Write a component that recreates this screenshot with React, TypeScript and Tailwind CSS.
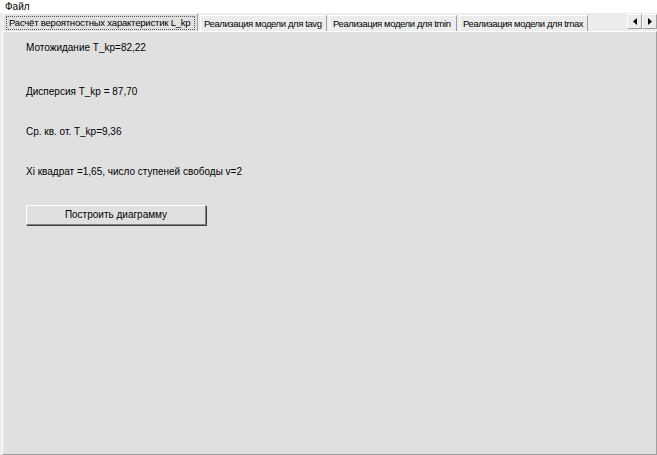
const tabs = [
  { label: "Реализация модели для tavg", w: "w-[127px]" },
  { label: "Реализация модели для tmin", w: "w-[128px]" },
  { label: "Реализация модели для tmax", w: "w-[129px]" },
];

const lines = [
  { text: "Мотожидание T_kp=82,22", mt: "mt-0" },
  { text: "Дисперсия T_kp = 87,70", mt: "mt-[32px]" },
  { text: "Ср. кв. от. T_kp=9,36", mt: "mt-[28px]" },
  { text: "Xi квадрат =1,65, число ступеней свободы v=2", mt: "mt-[28px]" },
];

const Arrow = ({ dir }: { dir: "left" | "right" }) => (
  <svg width="4" height="7" viewBox="0 0 4 7">
    {dir === "left" ? (
      <polygon points="4,0 4,7 0,3.5" fill="#000" />
    ) : (
      <polygon points="0,0 0,7 4,3.5" fill="#000" />
    )}
  </svg>
);

export default function App() {
  return (
    <div
      className="w-[657px] h-[455px] flex flex-col bg-[#ececec] text-[10px] text-black overflow-hidden whitespace-nowrap"
      style={{ fontFamily: '"Liberation Sans", Arial, sans-serif' }}
    >
      {/* MENU */}
      <div className="h-[13px] shrink-0 bg-white flex items-center px-[5px] leading-none">
        Файл
      </div>

      {/* TABS */}
      <div className="h-[18px] shrink-0 flex items-end pl-[3px] relative text-[9.5px]">
        <div className="w-[195px] shrink-0 h-[18px] px-[2px] flex items-center bg-[#e0e0e0] border-t border-l border-white border-r border-r-[#a0a0a0] tracking-[-0.2px]">
          <span className="border border-dotted border-[#555] px-[2px] leading-[12px] w-full overflow-hidden">
            Расчёт вероятностных характеристик L_kp
          </span>
        </div>
        {tabs.map((t) => (
          <div
            key={t.label}
            className={`${t.w} shrink-0 h-[16px] ml-[2px] px-[3px] flex items-center bg-[#ececec] border-t border-l border-white border-r border-r-[#a0a0a0] leading-none overflow-hidden tracking-[-0.4px]`}
          >
            {t.label}
          </div>
        ))}
        <div className="absolute right-0 top-[1px] flex">
          <div className="w-[15px] h-[15px] flex items-center justify-center bg-[#ececec] border border-white border-r-[#a0a0a0] border-b-[#a0a0a0]">
            <Arrow dir="left" />
          </div>
          <div className="w-[15px] h-[15px] flex items-center justify-center bg-[#ececec] border border-white border-r-[#a0a0a0] border-b-[#a0a0a0]">
            <Arrow dir="right" />
          </div>
        </div>
      </div>

      {/* PAGE */}
      <div className="flex-1 ml-[2px] bg-[#e0e0e0] border-l border-t border-white border-r border-r-[#a0a0a0] border-b border-b-[#a0a0a0] pl-[23px] pt-[10px]">
        <div className="flex flex-col leading-[12px]">
          {lines.map((l) => (
            <p key={l.text} className={l.mt}>
              {l.text}
            </p>
          ))}
        </div>
        <button className="mt-[27px] w-[180px] h-[20px] bg-[#e0e0e0] border border-white border-r-[#808080] border-b-[#808080] shadow-[1px_1px_0_#404040] leading-none">
          Построить диаграмму
        </button>
      </div>
    </div>
  );
}
